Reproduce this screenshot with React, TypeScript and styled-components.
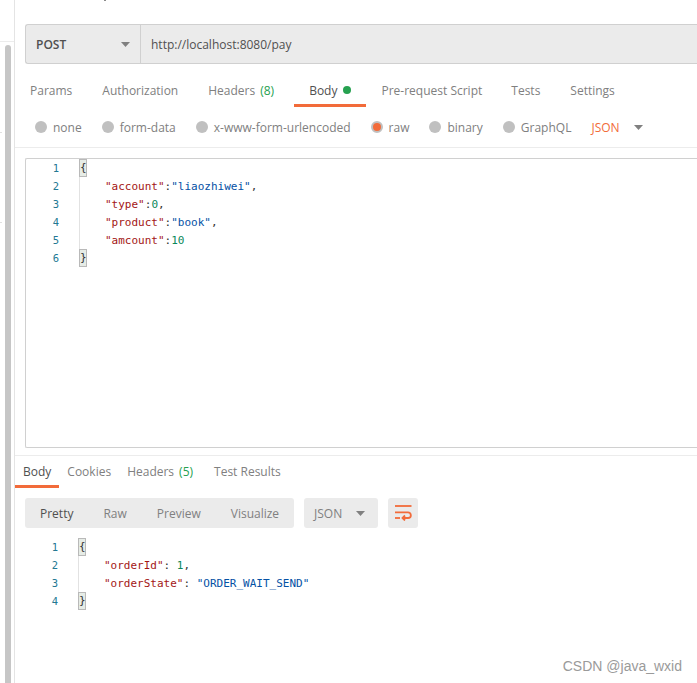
import styled, { createGlobalStyle } from "styled-components";

const GlobalStyle = createGlobalStyle`
  html, body {
    margin: 0;
    padding: 0;
    background: #fff;
  }
  body {
    width: 697px;
    height: 683px;
    overflow: hidden;
    font-family: "Open Sans", "Noto Sans", sans-serif;
  }
`;

const requestTabs = [
  { label: "Params", after: 30 },
  { label: "Authorization", after: 30 },
  { label: "Headers", count: "(8)", after: 20 },
  { label: "Body", active: true, dot: true, after: 15 },
  { label: "Pre-request Script", after: 29 },
  { label: "Tests", after: 30 },
  { label: "Settings", after: 0 },
];

const bodyTypes = [
  { label: "none" },
  { label: "form-data" },
  { label: "x-www-form-urlencoded" },
  { label: "raw", checked: true },
  { label: "binary" },
  { label: "GraphQL" },
];

const responseTabs = [
  { label: "Body", active: true, after: 8 },
  { label: "Cookies", after: 16 },
  { label: "Headers", count: "(5)", after: 21 },
  { label: "Test Results", after: 0 },
];

function Caret({ color = "#808080" }: { color?: string }) {
  return (
    <svg width="9" height="5" viewBox="0 0 9 5">
      <path d="M0 0h9L4.5 5z" fill={color} />
    </svg>
  );
}

function WrapIcon() {
  return (
    <svg width="17" height="16" viewBox="0 0 17 16" fill="none" stroke="#f26b3a" strokeWidth="1.8">
      <path d="M0 1h16.5" />
      <path d="M0 7.3h13a2.8 2.8 0 0 1 0 5.7H8" />
      <path d="M10 10.5 7.5 13l2.5 2.5" />
      <path d="M0 13h5" />
    </svg>
  );
}

export default function App() {
  return (
    <>
      <GlobalStyle />
      <Page>
        <SideRail>
          <SideLine />
          <ScrollThumb />
          <SideTick $top={132} />
          <SideTick $top={222} />
        </SideRail>
        <Main>
          <TopCut />
          <UrlBar>
            <MethodBox>
              POST
              <Caret />
            </MethodBox>
            <UrlText>http://localhost:8080/pay</UrlText>
          </UrlBar>

          <RequestTabs>
            {requestTabs.map((tab) => (
              <RequestTab key={tab.label} $active={tab.active} $after={tab.after}>
                {tab.label}
                {tab.count && <Count>{tab.count}</Count>}
                {tab.dot && <GreenDot />}
              </RequestTab>
            ))}
          </RequestTabs>

          <BodyTypeRow>
            {bodyTypes.map((type) => (
              <BodyType key={type.label}>
                <Radio $checked={type.checked} />
                {type.label}
              </BodyType>
            ))}
            <LangPicker>
              JSON
              <Caret />
            </LangPicker>
          </BodyTypeRow>

          <Editor>
            <Gutter>
              {[1, 2, 3, 4, 5, 6].map((n) => (
                <LineNo key={n}>{n}</LineNo>
              ))}
            </Gutter>
            <Code>
              <CodeLine><Brace>{"{"}</Brace></CodeLine>
              <CodeLine $indent><Key>"account"</Key>:<Str>"liaozhiwei"</Str>,</CodeLine>
              <CodeLine $indent><Key>"type"</Key>:<Num>0</Num>,</CodeLine>
              <CodeLine $indent><Key>"product"</Key>:<Str>"book"</Str>,</CodeLine>
              <CodeLine $indent><Key>"amcount"</Key>:<Num>10</Num></CodeLine>
              <CodeLine><Brace>{"}"}</Brace></CodeLine>
            </Code>
          </Editor>

          <ResponseTabs>
            {responseTabs.map((tab) => (
              <ResponseTab key={tab.label} $active={tab.active} $after={tab.after}>
                {tab.label}
                {tab.count && <Count>{tab.count}</Count>}
              </ResponseTab>
            ))}
          </ResponseTabs>

          <ResponseToolbar>
            <ViewGroup>
              <ViewOption $active>Pretty</ViewOption>
              <ViewOption>Raw</ViewOption>
              <ViewOption>Preview</ViewOption>
              <ViewOption>Visualize</ViewOption>
            </ViewGroup>
            <FormatPicker>
              JSON
              <Caret />
            </FormatPicker>
            <WrapButton>
              <WrapIcon />
            </WrapButton>
          </ResponseToolbar>

          <ResponseCode>
            <Gutter>
              {[1, 2, 3, 4].map((n) => (
                <LineNo key={n}>{n}</LineNo>
              ))}
            </Gutter>
            <Code>
              <CodeLine><Brace>{"{"}</Brace></CodeLine>
              <CodeLine $indent><Key>"orderId"</Key>: <Num>1</Num>,</CodeLine>
              <CodeLine $indent><Key>"orderState"</Key>: <Str>"ORDER_WAIT_SEND"</Str></CodeLine>
              <CodeLine><Brace>{"}"}</Brace></CodeLine>
            </Code>
          </ResponseCode>

          <Watermark>CSDN @java_wxid</Watermark>
        </Main>
      </Page>
    </>
  );
}

const Page = styled.div`
  width: 697px;
  height: 683px;
  display: flex;
  overflow: hidden;
  background: #fff;
`;

const SideRail = styled.div`
  position: relative;
  width: 14px;
  flex-shrink: 0;
  border-right: 1px solid #e4e4e4;
`;

const SideLine = styled.div`
  height: 1px;
  margin-top: 41px;
  background: #ececec;
`;

const SideTick = styled.div<{ $top: number }>`
  position: absolute;
  left: 0;
  top: ${(p) => p.$top}px;
  width: 2px;
  height: 1px;
  background: #e0e0e0;
`;

const ScrollThumb = styled.div`
  position: absolute;
  left: 5px;
  top: 45px;
  width: 6px;
  height: 638px;
  border-radius: 3px 3px 0 0;
  background: #c6c6c6;
`;

const Main = styled.div`
  position: relative;
  flex: 1;
  min-width: 0;
  height: 683px;
`;

/* bottom of a letter from the title that is cropped off above the shot */
const TopCut = styled.div`
  position: absolute;
  left: 89px;
  top: 0;
  width: 2px;
  height: 1px;
  background: #8a8a8a;
`;

const UrlBar = styled.div`
  display: flex;
  height: 40px;
  box-sizing: border-box;
  margin: 24px 0 0 10px;
  border: 1px solid #d0d0d0;
  border-right: none;
  border-radius: 3px 0 0 3px;
  background: #ebebeb;
`;

const MethodBox = styled.div`
  display: flex;
  align-items: center;
  justify-content: space-between;
  width: 115px;
  flex-shrink: 0;
  box-sizing: border-box;
  padding: 0 10px 0 10px;
  border-right: 1px solid #d0d0d0;
  font-size: 12px;
  font-weight: 600;
  color: #505050;
`;

const UrlText = styled.div`
  display: flex;
  align-items: center;
  padding-left: 10px;
  font-size: 12px;
  color: #505050;
`;

const RequestTabs = styled.div`
  display: flex;
  height: 43px;
  padding-left: 15px;
`;

const RequestTab = styled.div<{ $active?: boolean; $after: number }>`
  display: flex;
  align-items: center;
  gap: 5px;
  height: 43px;
  box-sizing: border-box;
  padding: 12px ${(p) => (p.$active ? "15px" : "0")} 0;
  margin-right: ${(p) => p.$after}px;
  border-bottom: 3px solid ${(p) => (p.$active ? "#f26b3a" : "transparent")};
  font-size: 12px;
  color: ${(p) => (p.$active ? "#505050" : "#808080")};
`;

const Count = styled.span`
  color: #26a150;
`;

const GreenDot = styled.span`
  width: 8px;
  height: 8px;
  margin-left: 1px;
  border-radius: 50%;
  background: #26a150;
`;

const BodyTypeRow = styled.div`
  display: flex;
  align-items: center;
  height: 41px;
  box-sizing: border-box;
  padding-left: 20px;
  border-bottom: 1px solid #ececec;
`;

const BodyType = styled.div`
  display: flex;
  align-items: center;
  gap: 6px;
  margin-right: 20px;
  font-size: 12px;
  color: #808080;
`;

const Radio = styled.span<{ $checked?: boolean }>`
  width: 12px;
  height: 12px;
  border-radius: 50%;
  background: ${(p) => (p.$checked ? "#f26b3a" : "#c0c0c0")};
  box-sizing: border-box;
  ${(p) => p.$checked && "border: 2px solid #c0c0c0;"}
`;

const LangPicker = styled.div`
  display: flex;
  align-items: center;
  gap: 14px;
  font-size: 12px;
  color: #f26b3a;
`;

const Editor = styled.div`
  display: flex;
  height: 290px;
  box-sizing: border-box;
  margin: 10px 0 0 10px;
  border: 1px solid #d0d0d0;
  border-right: none;
  border-radius: 2px 0 0 2px;
`;

const Gutter = styled.div`
  width: 53px;
  flex-shrink: 0;
  box-sizing: border-box;
  padding-right: 20px;
  text-align: right;
`;

const LineNo = styled.div`
  height: 18px;
  line-height: 18px;
  font-family: "DejaVu Sans Mono", monospace;
  font-size: 10.5px;
  color: #237893;
`;

const Code = styled.div`
  flex: 1;
  min-width: 0;
`;

const CodeLine = styled.div<{ $indent?: boolean }>`
  height: 18px;
  line-height: 18px;
  box-sizing: border-box;
  padding-left: ${(p) => (p.$indent ? "25px" : "0")};
  ${(p) => p.$indent && "border-left: 1px solid #e2e2e2; padding-top: 1px;"}
  font-family: "DejaVu Sans Mono", monospace;
  font-size: 11px;
  color: #333;
  white-space: pre;
`;

const Brace = styled.span`
  display: inline-block;
  width: 6px;
  height: 16px;
  line-height: 16px;
  text-align: center;
  border: 1px solid #b9b9b9;
  background: #e6ece6;
`;

const Key = styled.span`
  color: #a31515;
`;

const Str = styled.span`
  color: #0451a5;
`;

const Num = styled.span`
  color: #09885a;
`;

const ResponseTabs = styled.div`
  display: flex;
  height: 33px;
  box-sizing: border-box;
  margin-top: 7px;
  border-top: 1px solid #ececec;
`;

const ResponseTab = styled.div<{ $active?: boolean; $after: number }>`
  display: flex;
  align-items: center;
  gap: 5px;
  height: 32px;
  box-sizing: border-box;
  padding: 1px ${(p) => (p.$active ? "8px" : "0")} 0;
  margin-right: ${(p) => p.$after}px;
  border-bottom: 3px solid ${(p) => (p.$active ? "#f26b3a" : "transparent")};
  font-size: 12px;
  color: ${(p) => (p.$active ? "#505050" : "#808080")};
`;

const ResponseToolbar = styled.div`
  display: flex;
  gap: 10px;
  margin: 10px 0 0 10px;
`;

const ViewGroup = styled.div`
  display: flex;
  align-items: center;
  gap: 30px;
  width: 269px;
  height: 30px;
  box-sizing: border-box;
  padding-left: 15px;
  border-radius: 3px;
  background: #ebebeb;
`;

const ViewOption = styled.div<{ $active?: boolean }>`
  font-size: 12px;
  color: ${(p) => (p.$active ? "#505050" : "#808080")};
`;

const FormatPicker = styled.div`
  display: flex;
  align-items: center;
  justify-content: space-between;
  width: 74px;
  height: 30px;
  box-sizing: border-box;
  padding: 0 13px 0 10px;
  border-radius: 3px;
  background: #ebebeb;
  font-size: 12px;
  color: #808080;
`;

const WrapButton = styled.div`
  display: flex;
  align-items: center;
  justify-content: center;
  width: 30px;
  height: 30px;
  border-radius: 3px;
  background: #ebebeb;
`;

const ResponseCode = styled.div`
  display: flex;
  margin: 10px 0 0 10px;
`;

const Watermark = styled.div`
  position: absolute;
  right: 15px;
  bottom: 9px;
  font-family: "Liberation Sans", Arial, sans-serif;
  font-size: 14px;
  color: #9a9a9a;
`;
